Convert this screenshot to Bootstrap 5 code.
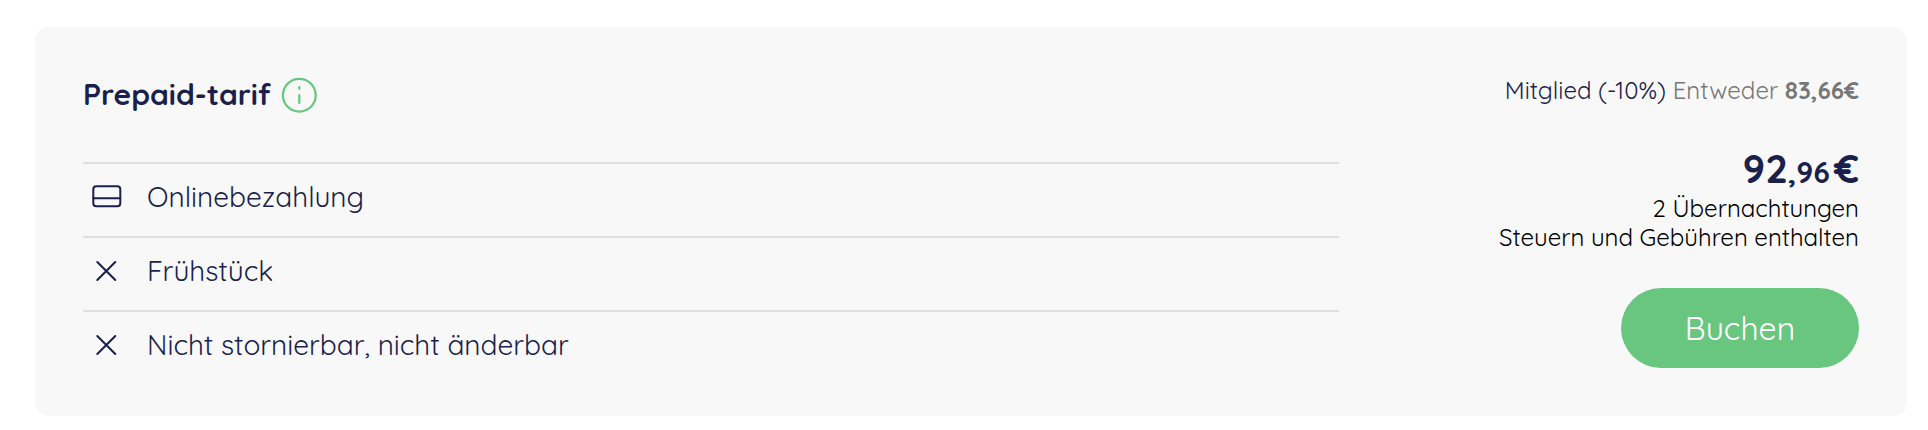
<!DOCTYPE html>
<html lang="de">
<head>
<meta charset="utf-8">
<meta name="viewport" content="width=device-width, initial-scale=1">
<title>Prepaid-tarif</title>
<link href="https://cdn.jsdelivr.net/npm/bootstrap@5.3.0/dist/css/bootstrap.min.css" rel="stylesheet">
<style>
body{font-family:Quicksand,Lato,"Open Sans",sans-serif;font-weight:400;color:#1b1f4b;background:#fff;overflow:hidden}
.rate-card{margin:27px 21px 0 35px;height:389px;background:#f8f8f8;border-radius:14px;padding:0 48px}
.rate-info{width:1256px}
.rate-title{height:135px;padding-top:48px}
.rate-title h2{font-size:30px;line-height:38px;font-weight:700}
.rate-row{height:74px;border-top:2px solid #e0e0e0;font-size:28px;padding-bottom:6px}
.rate-icon{width:32px;height:32px;margin:0 24px 0 8px;fill:none;stroke:#1b1f4b;stroke-width:2;stroke-linecap:round}
.info-icon{width:36px;height:36px;margin:2px 0 0 10px;fill:none;stroke:#69c67e;stroke-width:2.2;stroke-linecap:round}
.member{font-size:24px;line-height:30px;margin-top:48px}
.muted{color:#777}
.price{font-size:40px;line-height:50px;font-weight:700;margin-top:38px}
.cents{font-size:30px;margin-right:4px}
.terms{font-size:24px;line-height:29px;color:#000;margin-top:-3px}
.book{width:238px;height:80px;background:#69c67e;color:#fff;font-size:32px;font-weight:400;margin-top:36px}
.book:hover{background:#58b56d;color:#fff}
</style>
</head>
<body>
<main class="rate-card d-flex justify-content-between">
  <section class="rate-info">
    <div class="rate-title d-flex align-items-start">
      <h2 class="m-0">Prepaid-tarif</h2>
      <svg class="info-icon" viewBox="0 0 36 36"><circle cx="18.3" cy="18.2" r="16.4"/><path d="M18.3 10v1.8M18.3 18v8"/></svg>
    </div>
    <div class="rate-row d-flex align-items-center">
      <svg class="rate-icon" viewBox="0 0 32 32"><rect x="2.3" y="5.3" width="27" height="20" rx="3"/><path d="M2.3 17.2h27"/></svg>
      <span>Onlinebezahlung</span>
    </div>
    <div class="rate-row d-flex align-items-center">
      <svg class="rate-icon" viewBox="0 0 32 32"><path d="M6.3 7l18 18M24.3 7l-18 18"/></svg>
      <span>Frühstück</span>
    </div>
    <div class="rate-row d-flex align-items-center">
      <svg class="rate-icon" viewBox="0 0 32 32"><path d="M6.3 7l18 18M24.3 7l-18 18"/></svg>
      <span>Nicht stornierbar, nicht änderbar</span>
    </div>
  </section>
  <section class="text-end">
    <div class="member"><span>Mitglied (-10%)</span> <span class="muted">Entweder</span> <b class="muted fw-bold">83,66€</b></div>
    <div class="price">92<span class="cents">,96</span>€</div>
    <div class="terms">2 Übernachtungen<br>Steuern und Gebühren enthalten</div>
    <button class="btn book rounded-pill">Buchen</button>
  </section>
</main>
<script src="https://cdn.jsdelivr.net/npm/bootstrap@5.3.0/dist/js/bootstrap.bundle.min.js"></script>
</body>
</html>
